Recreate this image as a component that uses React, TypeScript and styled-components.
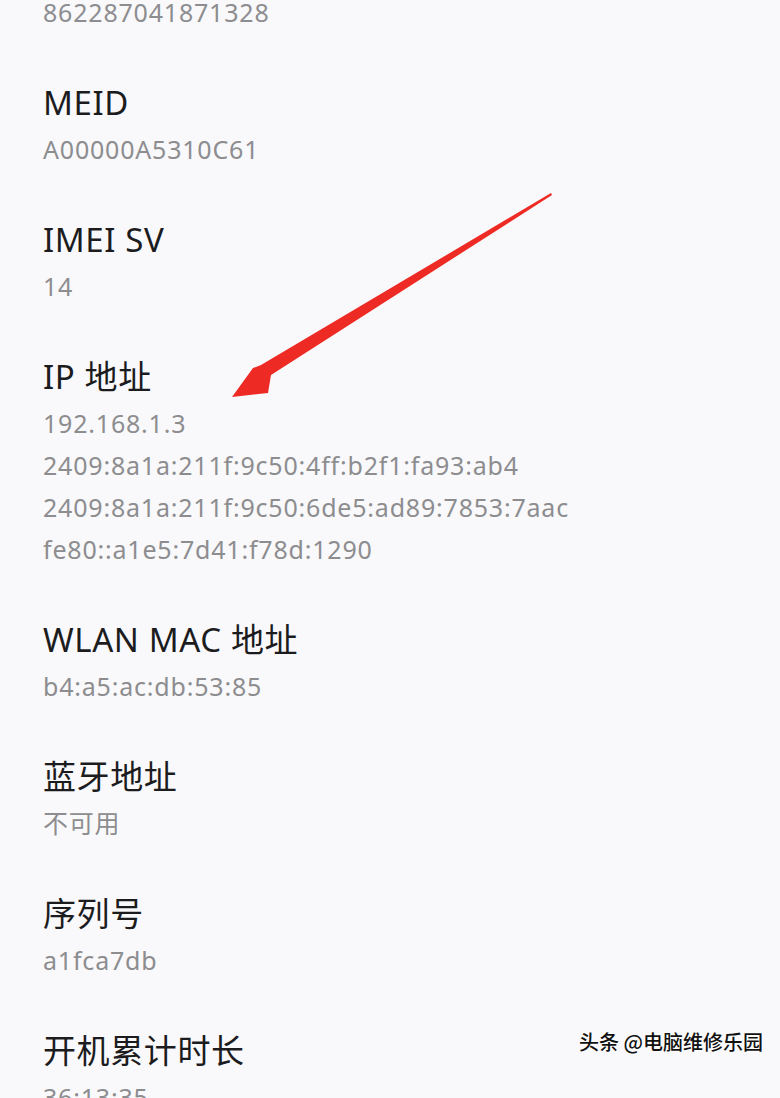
import React from 'react';
import styled, { createGlobalStyle } from 'styled-components';

const GlobalStyle = createGlobalStyle`
  html, body {
    margin: 0;
    padding: 0;
    background: #f9f9fb;
  }
`;

const Screen = styled.div`
  position: relative;
  width: 780px;
  height: 1098px;
  overflow: hidden;
  background: #f9f9fb;
  font-family: 'Noto Sans', 'Noto Sans CJK SC', sans-serif;
`;

const List = styled.div`
  display: flex;
  flex-direction: column;
  gap: 45px;
  padding-left: 43px;
  margin-top: -9px;
`;

const Section = styled.div`
  display: flex;
  flex-direction: column;
`;

const Title = styled.div`
  font-size: 33px;
  line-height: 50px;
  letter-spacing: 0.6px;
  color: #1c1c1e;
  font-family: 'Noto Sans', 'Noto Sans CJK SC', sans-serif;
`;

const Value = styled.div`
  font-size: 25px;
  line-height: 42px;
  color: #8d8d90;
  letter-spacing: 0.8px;
  font-family: 'Noto Sans', 'Noto Sans CJK SC', sans-serif;
`;

const Arrow = styled.svg`
  position: absolute;
  left: 0;
  top: 0;
  pointer-events: none;
`;

const Watermark = styled.div`
  position: absolute;
  right: 17px;
  top: 1028px;
  font-size: 20px;
  line-height: 28px;
  font-weight: 500;
  color: #111;
  font-family: 'Noto Sans CJK SC', sans-serif;
  text-shadow: 0 0 2px #fff, 0 0 2px #fff, 0 0 3px #fff;
  white-space: nowrap;
`;

interface Item {
  title?: string;
  values: string[];
}

const items: Item[] = [
  { values: ['862287041871328'] },
  { title: 'MEID', values: ['A00000A5310C61'] },
  { title: 'IMEI SV', values: ['14'] },
  {
    title: 'IP 地址',
    values: [
      '192.168.1.3',
      '2409:8a1a:211f:9c50:4ff:b2f1:fa93:ab4',
      '2409:8a1a:211f:9c50:6de5:ad89:7853:7aac',
      'fe80::a1e5:7d41:f78d:1290',
    ],
  },
  { title: 'WLAN MAC 地址', values: ['b4:a5:ac:db:53:85'] },
  { title: '蓝牙地址', values: ['不可用'] },
  { title: '序列号', values: ['a1fca7db'] },
  { title: '开机累计时长', values: ['36:13:35'] },
];

const App = () => {
  return (
    <Screen>
      <GlobalStyle />
      <List>
        {items.map((item, i) => (
          <Section key={i}>
            {item.title && <Title>{item.title}</Title>}
            {item.values.map((v) => (
              <Value key={v}>{v}</Value>
            ))}
          </Section>
        ))}
      </List>
      <Arrow width="780" height="1098" viewBox="0 0 780 1098">
        <polygon
          points="551,193 552,195 271,375 268,393 232,397 253,368 261,365"
          fill="#ee2a24"
        />
      </Arrow>
      <Watermark>头条 @电脑维修乐园</Watermark>
    </Screen>
  );
};

export default App;
